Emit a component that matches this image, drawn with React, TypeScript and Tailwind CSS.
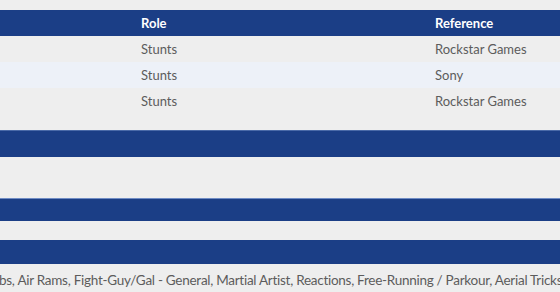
const rows = [
  { role: "Stunts", ref: "Rockstar Games" },
  { role: "Stunts", ref: "Sony" },
  { role: "Stunts", ref: "Rockstar Games" },
];

export default function App() {
  return (
    <div
      className="w-[560px] h-[292px] overflow-hidden bg-[#eeeeee] text-[13px] text-[#5c5c5c]"
      style={{ fontFamily: "Lato, 'Open Sans', sans-serif" }}
    >
      <div className="pt-[10px]">
        {/* table */}
        <div className="grid grid-cols-[133px_294px_1fr] h-[26px] items-center pt-[2px] bg-[#1b3e86] text-white font-bold">
          <div></div>
          <div className="pl-2">Role</div>
          <div className="pl-2">Reference</div>
        </div>
        {rows.map((r, i) => (
          <div
            key={i}
            className={
              "grid grid-cols-[133px_294px_1fr] h-[26px] items-center pt-[2px] " +
              (i === 1 ? "bg-[#edf1f8]" : "bg-[#eeeeee]")
            }
          >
            <div></div>
            <div className="pl-2">{r.role}</div>
            <div className="pl-2">{r.ref}</div>
          </div>
        ))}
      </div>

      <div className="mt-[16px] h-[27px] bg-[#1b3e86] border-t border-[#4a6aa8]"></div>
      <div className="h-[41px]"></div>
      <div className="h-[23px] bg-[#1b3e86] border-t border-[#6f8cc4]"></div>
      <div className="h-[19px]"></div>
      <div className="h-[24px] bg-[#1b3e86]"></div>
      <div className="whitespace-nowrap ml-[-1px] mt-[6px] text-[13.5px] tracking-[-0.27px] leading-[20px]">
        bs, Air Rams, Fight-Guy/Gal - General, Martial Artist, Reactions, Free-Running / Parkour, Aerial Tricks
      </div>
    </div>
  );
}
